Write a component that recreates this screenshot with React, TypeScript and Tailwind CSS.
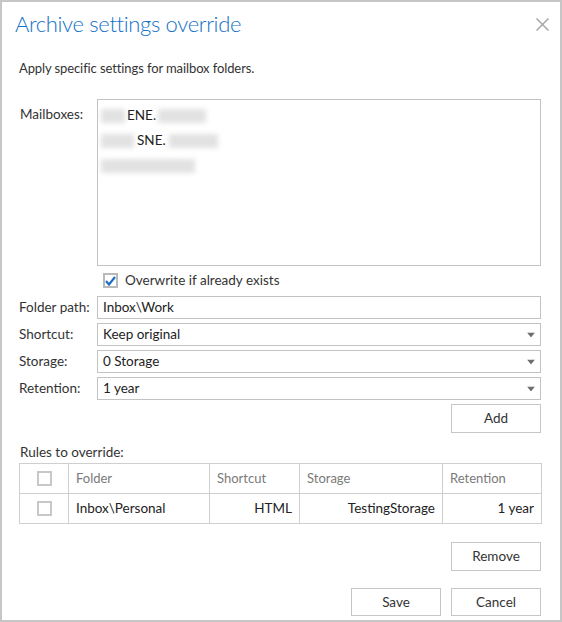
import React from "react";

const font = { fontFamily: 'Lato, "Open Sans", sans-serif' };

function Arrow() {
  return (
    <svg width="8" height="5" viewBox="0 0 8 5" className="absolute right-[5px] top-1/2 -translate-y-1/2">
      <path d="M0 0 H8 L4 5 Z" fill="#6e6e6e" />
    </svg>
  );
}

function Field({ label, value, select }: { label: string; value: string; select?: boolean }) {
  return (
    <div className="flex items-center h-[23px]">
      <div className="w-[78px] shrink-0 text-[13.5px] text-[#333]">{label}</div>
      <div className="relative flex-1 h-[23px] border border-[#c3c3c3] flex items-center pl-[5px] text-[13.5px] text-[#222]">
        {value}
        {select && <Arrow />}
      </div>
    </div>
  );
}

function Btn({ children }: { children: React.ReactNode }) {
  return (
    <div className="w-[90px] h-full border border-[#c6c6c6] bg-white flex items-center justify-center text-[13.5px] text-[#333]">
      {children}
    </div>
  );
}

function Box() {
  return <div className="w-[15px] h-[15px] border-2 border-[#c8c8c8] bg-white mx-auto" />;
}

function Blur({ w }: { w: number }) {
  return <span className="inline-block h-[14px] bg-[#e2e2e2] blur-[2.5px]" style={{ width: w }} />;
}

export default function App() {
  return (
    <div className="w-[562px] h-[622px] border-2 border-[#c6c6c6] bg-white flex flex-col" style={font}>
      <div className="h-[44px] shrink-0 flex items-center justify-between pl-[13px] pr-[11px]">
        <div className="text-[22px] font-light text-[#1271c8] leading-none tracking-[-0.35px]">Archive settings override</div>
        <svg width="13" height="13" viewBox="0 0 13 13">
          <path d="M0.5 0.5 L12.5 12.5 M12.5 0.5 L0.5 12.5" stroke="#a6a6a6" strokeWidth="1.5" />
        </svg>
      </div>
      <div className="px-[17px] pr-[19px] flex flex-col">
        <div className="h-[46px] flex items-center text-[13px] text-[#333] tracking-[-0.1px]">Apply specific settings for mailbox folders.</div>
        <div className="mt-[7px] flex h-[167px]">
          <div className="w-[78px] shrink-0 pt-[5px] text-[13.5px] text-[#333] leading-[20px] pl-[1px]">Mailboxes:</div>
          <div className="flex-1 border border-[#c3c3c3] pl-[3px] pt-[8px] text-[13.5px] text-[#222]">
            <div className="flex items-center gap-[2px] h-[15px]">
              <Blur w={24} />
              <span>ENE.</span>
              <Blur w={48} />
            </div>
            <div className="flex items-center gap-[3px] h-[15px] mt-[10px]">
              <Blur w={33} />
              <span>SNE.</span>
              <Blur w={49} />
            </div>
            <div className="flex items-center h-[15px] mt-[10px]">
              <Blur w={94} />
            </div>
          </div>
        </div>
        <div className="mt-[7px] h-[15px] flex items-center pl-[84px]">
          <div className="w-[15px] h-[15px] border-2 border-[#b9b9b9] bg-white flex items-center justify-center">
            <svg width="11" height="10" viewBox="0 0 11 10">
              <path d="M1 5 L4 8.5 L10 1" stroke="#1e6fc4" strokeWidth="2.2" fill="none" />
            </svg>
          </div>
          <span className="ml-[7px] text-[13.5px] text-[#333]">Overwrite if already exists</span>
        </div>
        <div className="mt-[8px] flex flex-col gap-[4px]">
          <Field label="Folder path:" value="Inbox\Work" />
          <Field label="Shortcut:" value="Keep original" select />
          <Field label="Storage:" value="0 Storage" select />
          <Field label="Retention:" value="1 year" select />
        </div>
        <div className="mt-[4px] h-[29px] flex justify-end">
          <Btn>Add</Btn>
        </div>
        <div className="mt-[9px] h-[20px] flex items-center text-[13.5px] text-[#333] pl-[1px]">Rules to override:</div>
        <table className="mt-[1px] border-collapse text-[13.5px] w-[522px] table-fixed">
          <colgroup>
            <col style={{ width: 49 }} />
            <col style={{ width: 141 }} />
            <col style={{ width: 90 }} />
            <col style={{ width: 143 }} />
            <col style={{ width: 99 }} />
          </colgroup>
          <thead>
            <tr className="h-[30px] text-[#7a7a7a] text-[13px]">
              <th className="border border-[#cfcfcf] p-0"><Box /></th>
              <th className="border border-[#cfcfcf] text-left font-normal pl-[7px]">Folder</th>
              <th className="border border-[#cfcfcf] text-left font-normal pl-[7px]">Shortcut</th>
              <th className="border border-[#cfcfcf] text-left font-normal pl-[7px]">Storage</th>
              <th className="border border-[#cfcfcf] text-left font-normal pl-[7px]">Retention</th>
            </tr>
          </thead>
          <tbody>
            <tr className="h-[30px] text-[#222]">
              <td className="border border-[#cfcfcf] p-0"><Box /></td>
              <td className="border border-[#cfcfcf] pl-[7px]">Inbox\Personal</td>
              <td className="border border-[#cfcfcf] text-right pr-[7px]">HTML</td>
              <td className="border border-[#cfcfcf] text-right pr-[7px]">TestingStorage</td>
              <td className="border border-[#cfcfcf] text-right pr-[7px]">1 year</td>
            </tr>
          </tbody>
        </table>
        <div className="mt-[18px] h-[29px] flex justify-end">
          <Btn>Remove</Btn>
        </div>
        <div className="mt-[17px] h-[28px] flex justify-end gap-[10px]">
          <Btn>Save</Btn>
          <Btn>Cancel</Btn>
        </div>
      </div>
    </div>
  );
}
